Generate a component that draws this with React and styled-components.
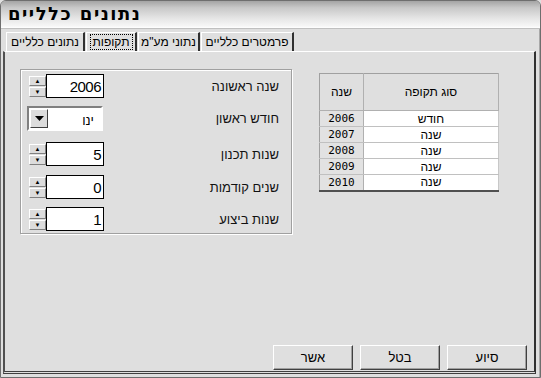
import React from 'react'
import styled, { createGlobalStyle } from 'styled-components'

const GlobalStyle = createGlobalStyle`
  html, body {
    margin: 0;
    padding: 0;
    background: #dfdfdf;
  }
  * { box-sizing: border-box; }
`

const Frame = styled.div`
  width: 541px;
  height: 378px;
  display: flex;
  flex-direction: column;
  background: #dfdfdf;
  border: 1px solid #6e6e6e;
  border-radius: 6px 6px 0 0;
  overflow: hidden;
  font-family: "Liberation Sans", "DejaVu Sans", sans-serif;
  color: #000;
`

const TitleBar = styled.div`
  height: 28px;
  flex-shrink: 0;
  display: flex;
  align-items: center;
  padding: 0 7px 2px;
  background: linear-gradient(#a4a4a4 0%, #c8c8c8 25%, #e6e6e6 65%, #f6f6f6 92%, #ffffff 100%);
  border-bottom: 1px solid #c0c0c0;
  font-family: "DejaVu Sans", sans-serif;
  font-weight: bold;
  font-size: 18px;
  letter-spacing: 1.5px;
`

const Body = styled.div`
  flex: 1;
  display: flex;
  flex-direction: column;
  padding: 3px 3px 3px 2px;
  border-right: 1px solid #a8a8a8;
`

const TabRow = styled.div`
  display: flex;
  height: 19px;
  padding-left: 3px;
`

const Tab = styled.div`
  width: ${p => p.$w}px;
  display: flex;
  align-items: center;
  justify-content: center;
  border-top: 1px solid #ffffff;
  border-left: 1px solid #ffffff;
  border-right: 2px solid #303030;
  margin-right: 1px;
  font-size: 12px;
  direction: rtl;
  white-space: nowrap;
`

const TabLabel = styled.span`
  padding: 0 2px;
  border: 1px dotted ${p => (p.$focus ? '#000' : 'transparent')};
  line-height: 14px;
`

const TabPanel = styled.div`
  flex: 1;
  display: flex;
  flex-direction: column;
  border-top: 1px solid #ffffff;
  border-left: 2px solid #505050;
  border-right: 2px solid #303030;
  border-bottom: 3px double #404040;
`

const Content = styled.div`
  flex: 1;
  display: flex;
  align-items: flex-start;
  padding: 17px 0 0 15px;
`

const GroupBox = styled.div`
  width: 272px;
  height: 165px;
  display: flex;
  flex-direction: column;
  padding: 4px 12px 0 8px;
  border: 1px solid #a0a0a0;
  box-shadow: inset 1px 1px 0 #ffffff, 1px 1px 0 #ffffff;
`

const FieldRow = styled.div`
  display: flex;
  align-items: center;
  justify-content: space-between;
  height: 24px;
  margin-top: ${p => p.$gap || 0}px;
`

const FieldLabel = styled.span`
  font-size: 13px;
  direction: rtl;
  color: #111;
`

const Spin = styled.div`
  display: flex;
  align-items: center;
`

const SpinButtons = styled.div`
  display: flex;
  flex-direction: column;
  width: 17px;
  height: 23px;
  padding-top: 1px;
`

const SpinButton = styled.div`
  flex: 1;
  display: flex;
  align-items: center;
  justify-content: center;
  margin-bottom: 1px;
  background: #dcdcdc;
  border: 1px solid;
  border-color: #ffffff #808080 #808080 #ffffff;
  font-size: 6px;
  line-height: 1;
  color: #000;
`

const NumberBox = styled.div`
  width: 58px;
  height: 24px;
  display: flex;
  align-items: center;
  justify-content: flex-end;
  padding-right: 2px;
  background: #ffffff;
  border: 1px solid #000;
  font-size: 15px;
  letter-spacing: -0.5px;
`

const Combo = styled.div`
  width: 76px;
  height: 25px;
  margin-left: -2px;
  display: flex;
  align-items: center;
  background: #ffffff;
  border: 2px solid;
  border-color: #808080 #ffffff #ffffff #808080;
`

const ComboButton = styled.div`
  width: 18px;
  height: 19px;
  display: flex;
  align-items: center;
  justify-content: center;
  margin-left: 1px;
  background: #dcdcdc;
  border: 1px solid;
  border-color: #ffffff #404040 #404040 #ffffff;
`

const ComboText = styled.span`
  flex: 1;
  text-align: right;
  padding-right: 7px;
  padding-top: 4px;
  font-size: 13px;
  direction: rtl;
`

const Grid = styled.table`
  margin-left: 27px;
  margin-top: 4px;
  width: 180px;
  border-collapse: collapse;
  border-top: 1px solid #a0a0a0;
  border-left: 1px solid #a0a0a0;
  border-right: 1px solid #c8c8c8;
  border-bottom: 2px solid #505050;
  font-size: 12px;
  direction: ltr;
`

const HeadCell = styled.th`
  height: 37px;
  width: ${p => p.$w}px;
  font-weight: normal;
  background: #dfdfdf;
  border-right: 1px solid #b0b0b0;
  border-bottom: 1px solid #b0b0b0;
  direction: rtl;
  font-size: 12px;
  padding: 0;
`

const YearCell = styled.td`
  height: 16px;
  padding: 0;
  text-align: center;
  background: #e2e2e2;
  border-right: 1px solid #b0b0b0;
  border-bottom: 1px solid #c0c0c0;
  font-family: "DejaVu Sans Mono", monospace;
  font-size: 11px;
`

const TypeCell = styled.td`
  height: 16px;
  padding: 0;
  text-align: center;
  background: #ffffff;
  border-bottom: 1px solid #c0c0c0;
  direction: rtl;
  font-size: 12px;
`

const Footer = styled.div`
  display: flex;
  justify-content: flex-end;
  gap: 7px;
  padding: 0 7px 1px 0;
`

const Button = styled.div`
  width: 80px;
  height: 25px;
  display: flex;
  align-items: center;
  justify-content: center;
  background: #dfdfdf;
  border: 1px solid;
  border-color: #ffffff #404040 #404040 #ffffff;
  box-shadow: inset -1px -1px 0 #a0a0a0;
  font-size: 13px;
  direction: rtl;
`

const DownArrow = () => (
  <svg width="9" height="5" viewBox="0 0 9 5">
    <path d="M0 0h9L4.5 5z" fill="#000" />
  </svg>
)

const tabs = [
  { label: 'נתונים כלליים', w: 79 },
  { label: 'תקופות', w: 51, focus: true },
  { label: 'נתוני מע"מ', w: 62 },
  { label: 'פרמטרים כלליים', w: 93 },
]

const fields = [
  { label: 'שנה ראשונה', value: '2006', gap: 0 },
  { label: 'חודש ראשון', value: 'ינו', combo: true, gap: 8 },
  { label: 'שנות תכנון', value: '5', gap: 12 },
  { label: 'שנים קודמות', value: '0', gap: 9 },
  { label: 'שנות ביצוע', value: '1', gap: 8 },
]

const periods = [
  ['2006', 'חודש'],
  ['2007', 'שנה'],
  ['2008', 'שנה'],
  ['2009', 'שנה'],
  ['2010', 'שנה'],
]

export default function App() {
  return (
    <>
      <GlobalStyle />
      <Frame>
        <TitleBar>נתונים כלליים</TitleBar>
        <Body>
          <TabRow>
            {tabs.map(t => (
              <Tab key={t.label} $w={t.w}>
                <TabLabel $focus={t.focus}>{t.label}</TabLabel>
              </Tab>
            ))}
          </TabRow>
          <TabPanel>
            <Content>
              <GroupBox>
                {fields.map(f => (
                  <FieldRow key={f.label} $gap={f.gap}>
                    {f.combo ? (
                      <Combo>
                        <ComboButton><DownArrow /></ComboButton>
                        <ComboText>{f.value}</ComboText>
                      </Combo>
                    ) : (
                      <Spin>
                        <SpinButtons>
                          <SpinButton>▲</SpinButton>
                          <SpinButton>▼</SpinButton>
                        </SpinButtons>
                        <NumberBox>{f.value}</NumberBox>
                      </Spin>
                    )}
                    <FieldLabel>{f.label}</FieldLabel>
                  </FieldRow>
                ))}
              </GroupBox>
              <Grid>
                <thead>
                  <tr>
                    <HeadCell $w={44}>שנה</HeadCell>
                    <HeadCell $w={136}>סוג תקופה</HeadCell>
                  </tr>
                </thead>
                <tbody>
                  {periods.map(([year, type]) => (
                    <tr key={year}>
                      <YearCell>{year}</YearCell>
                      <TypeCell>{type}</TypeCell>
                    </tr>
                  ))}
                </tbody>
              </Grid>
            </Content>
            <Footer>
              <Button>אשר</Button>
              <Button>בטל</Button>
              <Button>סיוע</Button>
            </Footer>
          </TabPanel>
        </Body>
      </Frame>
    </>
  )
}
